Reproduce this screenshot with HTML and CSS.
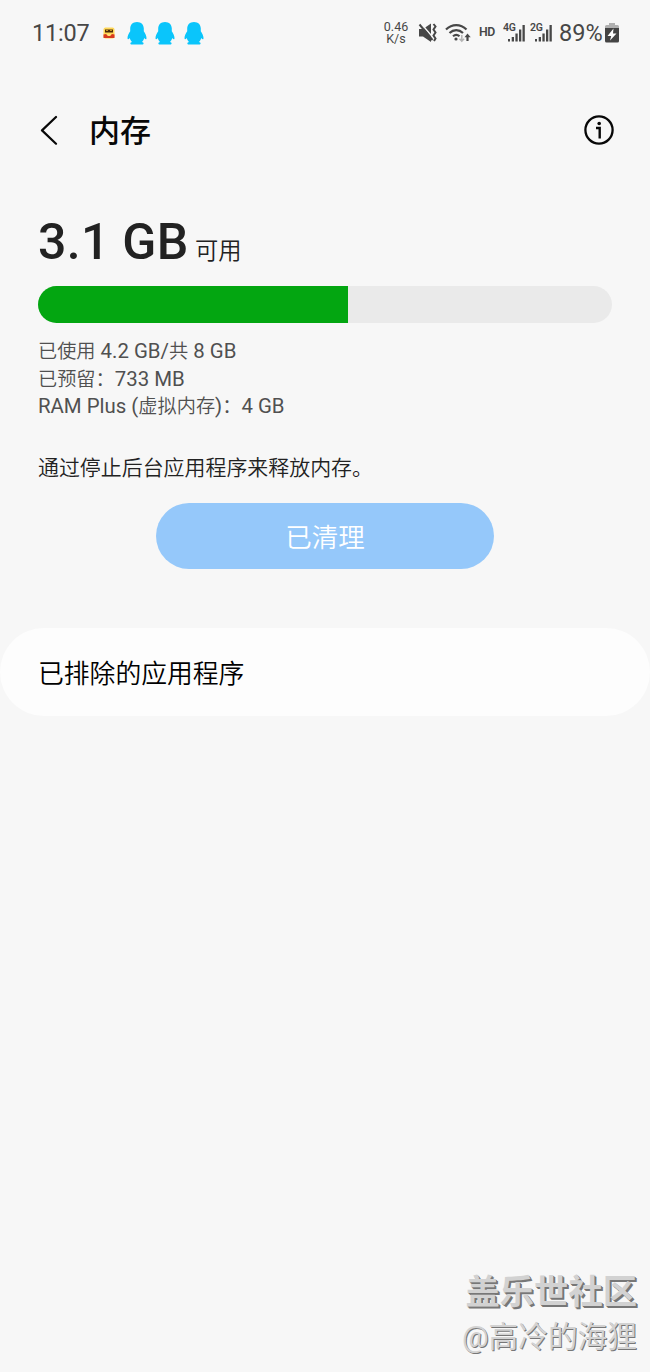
FILE: index.html
```html
<!DOCTYPE html>
<html lang="zh-CN">
<head>
<meta charset="utf-8">
<title>内存</title>
<link rel="stylesheet" href="styles.css">
</head>
<body>
<div class="screen">
  <div class="status">
    <div class="status-left">
      <span class="clock">11:07</span>
      <svg class="app-badge" width="12" height="12" viewBox="0 0 12 12"><rect x=".5" y=".5" width="11" height="11" rx="2" fill="#ffd858"/><path d="M2 2.500h8v3H2z" fill="#4b2b08"/><path d="M3 3.500h2M7 3.500h2" stroke="#c79222"/><path d="M.5 7.500 3 7l2 2h2l2-2 2.500.5V11H.5z" fill="#d83b20"/><path d="M4 7h4L7 9H5z" fill="#ffe27a"/></svg>
      <svg class="qq" width="20" height="23" viewBox="0 0 20 23"><path d="M10 0C5.800 0 3.200 2.800 3.200 6.500v2.700C1.600 11.700.5 14 .5 16c0 1.700 1 1.500 2.300 0 .4 1.800 1.200 3 2.300 4-2.300.5-2.300 2.500-.1 2.500h10c2.200 0 2.200-2-.1-2.500 1.100-1 1.900-2.200 2.300-4 1.300 1.500 2.300 1.700 2.300 0 0-2-1.100-4.300-2.700-6.800V6.500C16.800 2.800 14.200 0 10 0z" fill="#0ac5fb"/></svg>
      <svg class="qq" width="20" height="23" viewBox="0 0 20 23"><path d="M10 0C5.800 0 3.200 2.800 3.200 6.500v2.700C1.600 11.700.5 14 .5 16c0 1.700 1 1.500 2.300 0 .4 1.800 1.200 3 2.300 4-2.300.5-2.300 2.500-.1 2.500h10c2.200 0 2.200-2-.1-2.500 1.100-1 1.900-2.200 2.300-4 1.300 1.500 2.300 1.700 2.300 0 0-2-1.100-4.300-2.700-6.800V6.500C16.800 2.800 14.200 0 10 0z" fill="#0ac5fb"/></svg>
      <svg class="qq" width="20" height="23" viewBox="0 0 20 23"><path d="M10 0C5.800 0 3.200 2.800 3.200 6.500v2.700C1.600 11.700.5 14 .5 16c0 1.700 1 1.500 2.300 0 .4 1.800 1.200 3 2.300 4-2.300.5-2.300 2.500-.1 2.500h10c2.200 0 2.200-2-.1-2.500 1.100-1 1.900-2.200 2.300-4 1.300 1.500 2.300 1.700 2.300 0 0-2-1.100-4.300-2.700-6.800V6.500C16.800 2.800 14.200 0 10 0z" fill="#0ac5fb"/></svg>
    </div>
    <div class="status-right">
      <div class="speed"><span>0.46</span><span>K/s</span></div>
      <svg class="mute" width="20" height="20" viewBox="0 0 20 20" fill="none" stroke="#474747"><path d="M1 6h4l8-5.500v18.500l-8-5.500H1z" fill="#474747" stroke="none"/><path d="M3 .5l12 14" stroke="#f7f7f7" stroke-width="1.500"/><path d="M1.500 1.500l13 15.500" stroke-width="2"/><path d="M15.500 1l2 2.500-2 3 2 3-2 3 2 3-1.500 2.500" stroke-width="2"/></svg>
      <svg class="wifi" width="26" height="20" viewBox="0 0 26 20" fill="none" stroke="#474747" stroke-width="2.200"><path d="M1 6.500C7 .6 15.500.6 21.500 6.500M4.500 10c4-3.800 9.500-3.800 13.500 0M8 13.300c2-1.800 4.500-1.800 6.500 0"/><circle cx="11" cy="16" r="1.600" fill="#474747" stroke="none"/><path d="M16.800 12v6M14.500 15.700l2.300 2.500 2.300-2.500" stroke="#b4b4b4" stroke-width="1.500"/><path d="M22.500 18v-5"/><path d="M19.500 14.200 22.500 10.500l3.200 3.700z" fill="#474747" stroke="none"/></svg>
      <span class="hd">HD</span>
      <div class="signal"><span class="net">4G</span><svg width="18" height="18" viewBox="0 0 18 18" fill="#474747"><path d="M1 15h2v2.500H1zM4.700 13H7v4.500H4.700zM8.400 9.500h2.300v8H8.400zM12 5.500h2.300v12H12zM15.500 1h2.300v16.500h-2.300z"/></svg></div>
      <div class="signal second"><span class="net">2G</span><svg width="18" height="18" viewBox="0 0 18 18" fill="#474747"><path d="M1 15h2v2.500H1zM4.700 13H7v4.500H4.700zM8.400 9.500h2.300v8H8.400zM12 5.500h2.300v12H12zM15.500 1h2.300v16.500h-2.300z"/></svg></div>
      <span class="percent">89%</span>
      <svg class="battery" width="14" height="20" viewBox="0 0 14 20"><path d="M4 0h6v2h2.500Q14 2 14 3.500V6H0V3.500Q0 2 1.500 2H4z" fill="#b0b0b0"/><path d="M0 5h14v13q0 1.500-1.500 1.500h-11Q0 19.500 0 18z" fill="#444"/><path d="M8.500 5.500 2.500 13h3.700L5 17.500l6.500-7H8z" fill="#fff"/></svg>
    </div>
  </div>

  <header class="titlebar">
    <svg class="back" width="18" height="30" viewBox="0 0 18 30" fill="none" stroke="#080808" stroke-width="2.200" stroke-linecap="round" stroke-linejoin="round"><path d="M16 2 2 15.400 16 28.700"/></svg>
    <h1 class="title">内存</h1>
    <svg class="info" width="30" height="30" viewBox="0 0 30 30"><circle cx="15" cy="15" r="13.600" fill="none" stroke="#080808" stroke-width="2.300"/><circle cx="15.200" cy="8.500" r="1.800" fill="#080808"/><path d="M12 13h3.700V23.500" fill="none" stroke="#080808" stroke-width="2.400"/></svg>
  </header>

  <main class="memory">
    <div class="available"><span class="amount">3.1 GB</span><span class="unit">可用</span></div>
    <div class="bar"><div class="bar-used"></div></div>
    <div class="details">
      <div>已使用<span class="latin"> 4.2 GB/</span>共<span class="latin"> 8 GB</span></div>
      <div>已预留：<span class="latin">733 MB</span></div>
      <div><span class="latin">RAM Plus (</span>虚拟内存<span class="latin">)</span>：<span class="latin">4 GB</span></div>
    </div>
    <p class="hint">通过停止后台应用程序来释放内存。</p>
    <div class="clean">已清理</div>
  </main>

  <section class="excluded">已排除的应用程序</section>

  <div class="watermark">
    <div class="community">盖乐世社区</div>
    <div class="author">@高冷的海狸</div>
  </div>
</div>
</body>
</html>
```
FILE: styles.css
```css
* { box-sizing: border-box; }
body { margin: 0; background: #f7f7f7; }
.screen {
  position: relative;
  width: 650px;
  height: 1372px;
  overflow: hidden;
  background: #f7f7f7;
  font-family: Roboto, "Noto Sans CJK SC", sans-serif;
  color: #222;
}
svg { display: block; flex: none; }

.status {
  display: flex;
  justify-content: space-between;
  height: 66px;
  padding: 0 31px 0 32px;
  color: #474747;
}
.status-left, .status-right { display: flex; align-items: center; height: 66px; }
.clock { width: 71px; font-size: 23.5px; line-height: 28px; letter-spacing: -.2px; }
.app-badge { margin-right: 12px; }
.qq { margin-right: 8.300px; }
.speed {
  display: flex;
  flex-direction: column;
  align-items: center;
  width: 26px;
  margin-right: 9px;
  font-size: 12.5px;
  line-height: 12px;
  white-space: nowrap;
}
.speed span { display: block; height: 12px; }
.mute { margin-right: 7px; }
.wifi { margin-right: 8px; }
.hd { width: 24px; margin-top: -2px; font-size: 12.3px; font-weight: 600; letter-spacing: -.4px; }
.signal { display: flex; width: 22px; height: 20px; }
.second { margin-left: 5px; margin-right: 7px; }
.net { width: 4px; font-size: 10.5px; font-weight: 600; line-height: 9px; letter-spacing: -.3px; }
.signal svg { margin-top: 1px; }
.percent { width: 46px; font-size: 23.5px; line-height: 28px; }

.titlebar { display: flex; align-items: center; height: 130px; padding: 0 36px 2px 40px; }
.title { flex: 1; margin: 4px 0 0 31px; font-size: 31px; font-weight: 500; line-height: 40px; color: #080808; }

.memory { display: flex; flex-direction: column; padding: 0 38px; }
.available { display: flex; align-items: baseline; height: 90px; padding-top: 12px; }
.amount { width: 157px; font-size: 50px; font-weight: 500; line-height: 68px; letter-spacing: .3px; white-space: nowrap; }
.unit { font-size: 23.300px; font-family: "Noto Sans CJK SC DemiLight", "Noto Sans CJK SC", sans-serif; font-weight: 350; }
.bar { height: 37px; border-radius: 19px; overflow: hidden; background: #eaeaea; }
.bar-used { width: 310px; height: 37px; background: #03a611; }
.details { margin-top: 15px; font-size: 19.2px; font-weight: 350; line-height: 27.7px; color: #505050; }
.details div { height: 27.7px; white-space: nowrap; }
.latin { font-size: 20.4px; font-weight: 400; }
.hint { margin: 31px 0 0; font-size: 20.95px; font-weight: 350; line-height: 32px; }
.clean {
  align-self: center;
  width: 338px;
  height: 66px;
  margin-top: 19px;
  border-radius: 33px;
  background: #95c8fa;
  color: #fff;
  font-size: 26.5px;
  font-weight: 350;
  line-height: 70px;
  text-align: center;
}
.excluded {
  height: 88px;
  margin-top: 59px;
  padding-left: 38px;
  border-radius: 44px;
  background: #fdfdfd;
  color: #000;
  font-size: 25.8px;
  font-weight: 350;
  line-height: 93px;
}

.watermark {
  position: absolute;
  right: 13px;
  bottom: 13px;
  display: flex;
  flex-direction: column;
  align-items: flex-end;
  color: #d2d2d2;
  white-space: nowrap;
}
.community { font-size: 34.3px; font-weight: 700; line-height: 46px; text-shadow: 1px 1px #777, 2px 2px #777; }
.author { font-size: 29.7px; line-height: 44px; text-shadow: 1px 1px #777; }
```
